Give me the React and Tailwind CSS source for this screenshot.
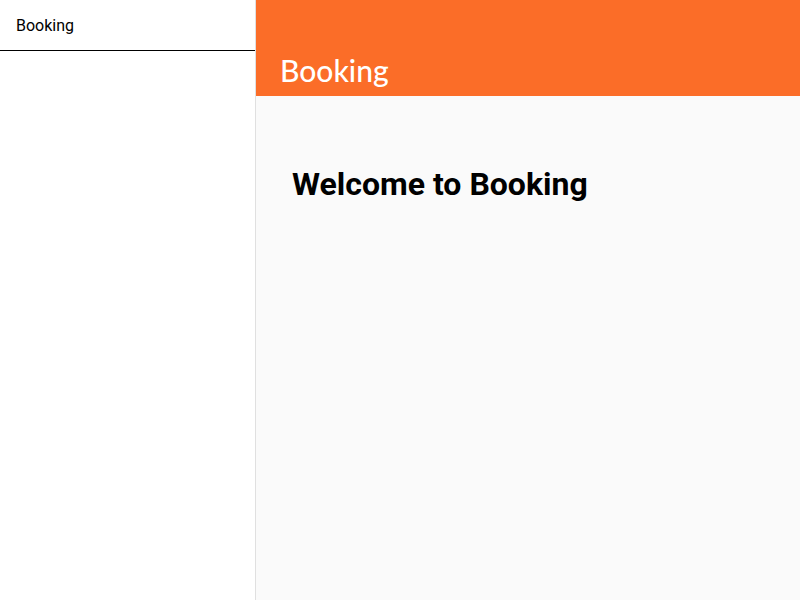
export default function App() {
  return (
    <div className="flex min-h-screen bg-[#fafafa] font-['Roboto',sans-serif] text-black">
      <aside className="w-64 shrink-0 border-r border-[#e0e0e0] bg-white">
        <nav className="border-b border-black px-4 pt-3.5 pb-3">
          <a href="#booking" className="block text-base leading-6">Booking</a>
        </nav>
      </aside>
      <div className="min-w-0 flex-1">
        <header className="flex h-24 items-end bg-[#fb6d28] px-6 pb-1.5">
          <div className="font-['Lato',sans-serif] text-[30px] leading-10 font-medium text-white">Booking</div>
        </header>
        <main className="px-9 pt-16">
          <h1 className="text-[32px] leading-12 font-bold">Welcome to Booking</h1>
        </main>
      </div>
    </div>
  );
}
